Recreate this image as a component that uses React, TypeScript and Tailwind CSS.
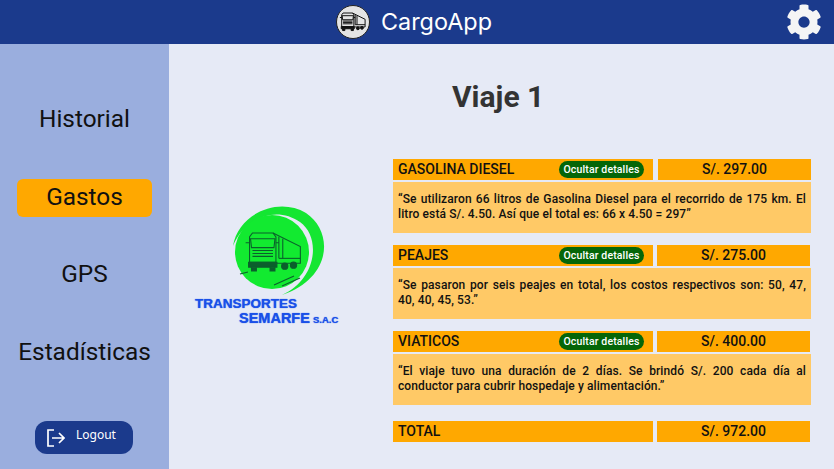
import React from "react";
import { FaCog } from "react-icons/fa";

const items = [
  {
    name: "GASOLINA DIESEL",
    amount: "S/. 297.00",
    text: "“Se utilizaron 66 litros de Gasolina Diesel para el recorrido de 175 km. El litro está S/. 4.50. Así que el total es: 66 x 4.50 = 297”",
    gap: "gap-[5px]",
  },
  {
    name: "PEAJES",
    amount: "S/. 275.00",
    text: "“Se pasaron por seis peajes en total, los costos respectivos son: 50, 47, 40, 40, 45, 53.”",
    gap: "gap-[4px]",
  },
  {
    name: "VIATICOS",
    amount: "S/. 400.00",
    text: "“El viaje tuvo una duración de 2 días. Se brindó S/. 200 cada día al conductor para cubrir hospedaje y alimentación.”",
    gap: "gap-[4px]",
  },
];

// cab seen from the front, trailer going back to the right
const TruckIcon = ({ stroke, width, height, sw }: { stroke: string; width: number; height: number; sw: number }) => (
  <svg width={width} height={height} viewBox="0 0 60 44" fill="none" stroke={stroke} strokeWidth={sw}>
    <path d="M6 6 L9 2 H30 L33 6 V32 H6 Z" />
    <path d="M7 8 H32 L31 17 H8 Z" />
    <path d="M9 20 H30 M9 23 H30 M9 26 H30" />
    <path d="M5 32 H34 V37 H5 Z" fill={stroke} />
    <path d="M30 2 L58 16 V33 H34" />
    <path d="M36 6 V28 M40 8 V28" />
    <path d="M36 28 H58" />
    <path d="M8 37 V41 H13 V37 M27 37 V41 H32 V37" fill={stroke} />
    <circle cx="42" cy="36" r="3.2" fill={stroke} />
    <circle cx="51" cy="35" r="3.2" fill={stroke} />
    <path d="M2 12 H6 M33 12 H36" />
  </svg>
);

const Row = ({ name, amount, pill, gap }: { name: string; amount: string; pill?: boolean; gap: string }) => (
  <div className={`flex h-[21px] ${gap}`}>
    <div className="flex w-[260px] items-center justify-between bg-[#ffa800] pl-[5px] pr-[9px]">
      <span className="text-[14px] font-medium text-[#111]">{name}</span>
      {pill && (
        <span className="flex h-[17px] w-[85px] items-center justify-center rounded-full bg-[#056608] text-[10.5px] font-medium tracking-[0.15px] text-white">
          Ocultar detalles
        </span>
      )}
    </div>
    <div className="flex w-[153px] items-center justify-center bg-[#ffa800] text-[14px] font-medium text-[#111]">
      {amount}
    </div>
  </div>
);

export default function App() {
  return (
    <div className="flex h-[469px] w-[834px] flex-col overflow-hidden bg-[#e6eaf6] font-['Roboto',sans-serif]">
      <header className="relative flex h-[44px] shrink-0 items-center justify-center gap-[11px] bg-[#1b3a8c] pr-[6px]">
        <div className="flex h-[34px] w-[34px] items-center justify-center rounded-full border border-[#222] bg-[#e4e4e4]">
          <TruckIcon stroke="#111" width={27} height={20} sw={2.2} />
        </div>
        <span className="font-['Inter',sans-serif] text-[23.4px] text-white">CargoApp</span>
        <FaCog className="absolute right-[12px] top-[4px] text-[#f5f5f5]" size={36} />
      </header>

      <div className="flex flex-1">
        <aside className="flex w-[169px] shrink-0 flex-col items-center bg-[#9aaede] text-[24.4px] text-[#111]">
          <div className="mt-[59px] flex h-[32px] items-center">Historial</div>
          <div className="mt-[44px] flex h-[38px] w-[135px] items-center justify-center rounded-[6px] bg-[#ffa800] pb-[1px]">
            Gastos
          </div>
          <div className="mt-[41px] flex h-[32px] items-center">GPS</div>
          <div className="mt-[46px] flex h-[32px] items-center">Estadísticas</div>
          <button className="ml-[35px] mt-[53px] flex h-[33px] w-[98px] items-center gap-[11px] self-start rounded-[12px] bg-[#1b3a8c] pl-[12px] font-['Noto_Sans',sans-serif] text-[12px] text-white">
            <svg width="18" height="18" viewBox="0 0 18 18" fill="none" stroke="white" strokeWidth="1.7">
              <path d="M7 1 H1 V17 H7" />
              <path d="M5 9 H17 M12 4 L17 9 L12 14" />
            </svg>
            <span className="-mt-[5px]">Logout</span>
          </button>
        </aside>

        <main className="flex flex-1">
          <div className="flex w-[224px] shrink-0 flex-col items-start pt-[160px] pl-[61px]">
            <div className="relative h-[96px] w-[96px]">
              <svg width="96" height="96" viewBox="0 0 96 96" className="absolute left-0 top-0">
                <path d="M3 42 C8 10 48 -8 76 9 C104 28 102 74 52 91 C86 76 92 34 70 18 C46 1 14 14 3 42 Z" fill="#14e632" />
                <circle cx="42" cy="48" r="37" fill="#12ea30" />
                <path d="M10 70 L18 68 M44 81 L64 72 M52 82 L70 74" stroke="#0b5f2c" strokeWidth="1.2" fill="none" />
              </svg>
              <div className="absolute left-[13px] top-[27px]">
                <TruckIcon stroke="#0b5f2c" width={60} height={43} sw={1.1} />
              </div>
            </div>
            <div className="-ml-[35px] -mt-[3px] font-['Liberation_Sans',sans-serif] text-[13.5px] font-bold leading-[14px] text-[#1a50e8] [text-shadow:0_0_1px_#1a50e8]">
              <div>TRANSPORTES</div>
              <div className="pl-[44px] text-[14.5px]">
                SEMARFE<span className="ml-[3px] text-[9.5px]">S.A.C</span>
              </div>
            </div>
          </div>

          <div className="flex-1">
            <h1 className="pt-[34px] pl-[59px] text-[30px] font-bold leading-[38px] text-[#333]">Viaje 1</h1>
            <div className="mt-[43px] flex flex-col">
              {items.map((it) => (
                <div key={it.name} className="mb-[12px] flex flex-col gap-[2px]">
                  <Row name={it.name} amount={it.amount} gap={it.gap} pill />
                  <p className="h-[51px] w-[418px] bg-[#ffc966] px-[5px] pt-[10px] text-justify text-[12px] font-medium leading-[14.5px] tracking-[0.1px] text-[#111]">
                    {it.text}
                  </p>
                </div>
              ))}
              <div className="mt-[4px]">
                <Row name="TOTAL" amount="S/. 972.00" gap="gap-[4px]" />
              </div>
            </div>
          </div>
        </main>
      </div>
    </div>
  );
}
